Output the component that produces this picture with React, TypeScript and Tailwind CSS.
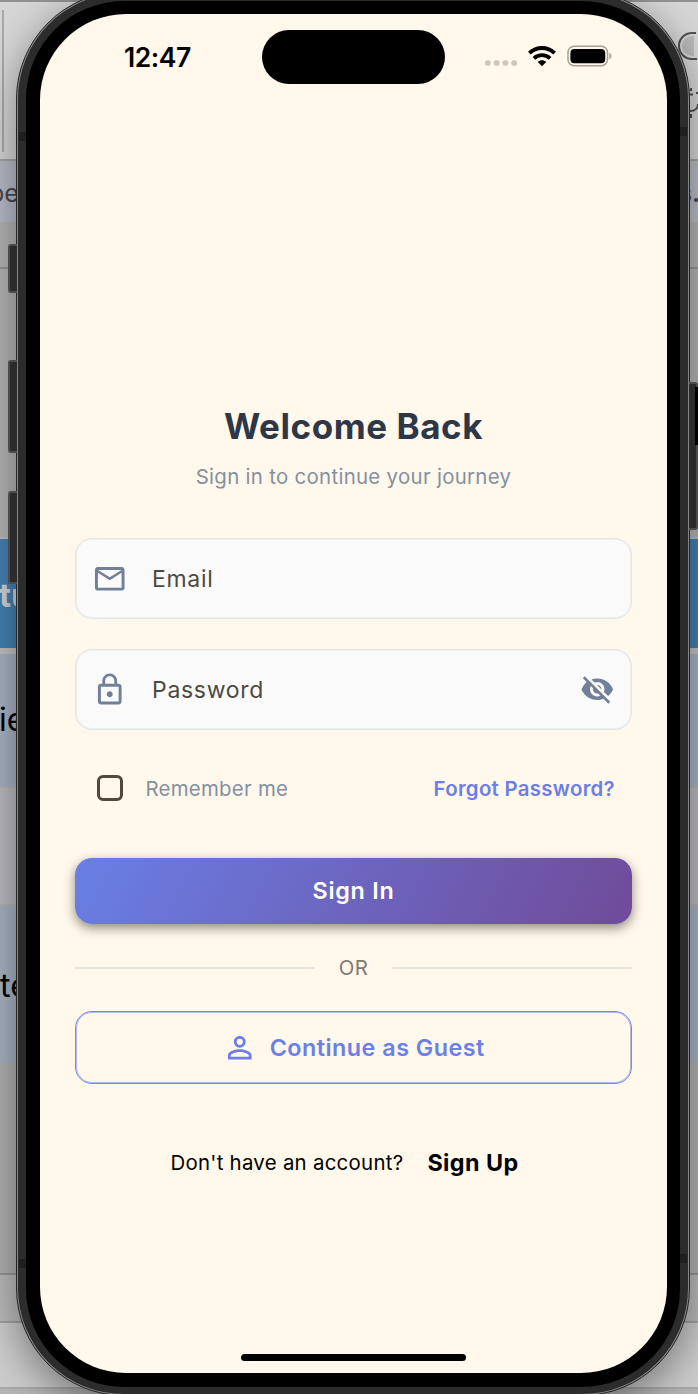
import type { ReactNode } from "react";
import { MdLockOutline, MdMailOutline, MdPersonOutline, MdVisibilityOff } from "react-icons/md";

function StatusBar() {
  return (
    <header className="flex h-[90px] shrink-0 items-start">
      <div className="mt-[28px] ml-[84px] w-[138px] text-[26.5px] leading-[30px] font-semibold tracking-[-0.45px] text-black">
        12:47
      </div>
      <div className="mt-4 h-[54px] w-[183px] rounded-full bg-black" />
      <div className="mt-[30px] ml-[40px] flex h-6 items-center">
        <svg className="mt-3.5 h-[6px] w-[33px]" viewBox="0 0 33 6" fill="#ccc7bb">
          <rect x="0" y="0.2" width="5.6" height="5.6" rx="2" />
          <rect x="8.8" y="0.2" width="5.6" height="5.6" rx="2" />
          <rect x="17.6" y="0.2" width="5.6" height="5.6" rx="2" />
          <rect x="26.4" y="0.2" width="5.6" height="5.6" rx="2" />
        </svg>
        <svg className="ml-[10px] h-[20px] w-[28px]" viewBox="0 0 28 20" fill="none" stroke="#000" strokeWidth="3.9">
          <path d="M1.4 7.1C8.4.3 19.6.3 26.6 7.1" />
          <path d="M5.9 12.3c4.6-4.3 11.6-4.3 16.2 0" />
          <path d="M9.7 15.9c2.4-2.2 6.2-2.2 8.6 0L14 20.2z" fill="#000" stroke="none" />
        </svg>
        <svg className="ml-[11px] h-[22px] w-[46px]" viewBox="0 0 46 22">
          <rect x="1" y="1.2" width="39.5" height="19.5" rx="6.2" fill="none" stroke="#a39f96" strokeWidth="1.5" />
          <rect x="3.4" y="4" width="34.8" height="14.2" rx="4" />
          <path d="M42.3 7.7c2.8 1 2.8 5.6 0 6.6z" fill="#a39f96" />
        </svg>
      </div>
    </header>
  );
}

function Field({ icon, label, trailing }: { icon: ReactNode; label: string; trailing?: ReactNode }) {
  return (
    <div className="flex h-[81px] items-center rounded-[17px] border border-[#e2e4e6] bg-[#fafafa] pr-[17px] pl-[16px] text-[35.5px] text-[#718096] shadow-[inset_0_0_0_1px_#efeff0]">
      {icon}
      <span className="mt-[2px] ml-[24.5px] flex-1 text-[23px] tracking-[0.7px] text-[#4d493f]">{label}</span>
      {trailing}
    </div>
  );
}

function LoginForm() {
  return (
    <main className="flex flex-1 flex-col px-[35px] pt-[300px]">
      <h1 className="text-center text-[35px] leading-[44px] font-bold tracking-[0.55px] text-[#2d3748]">Welcome Back</h1>
      <p className="mt-[15px] text-center text-[20.4px] leading-[28px] tracking-[0.31px] text-[#8390a2]">
        Sign in to continue your journey
      </p>
      <div className="mt-[47px] flex flex-col gap-[30px]">
        <Field icon={<MdMailOutline />} label="Email" />
        <Field icon={<MdLockOutline />} label="Password" trailing={<MdVisibilityOff className="text-[34.5px]" />} />
      </div>
      <div className="mt-[38px] flex h-10 items-center pr-[17px] pl-[22px] text-[20.4px]">
        <i className="size-[26px] rounded-[6px] border-[3px] border-[#4d493f]" />
        <span className="mt-0.5 ml-[22.5px] flex-1 tracking-[0.26px] text-[#8390a2]">Remember me</span>
        <span className="mt-0.5 font-semibold tracking-[0.3px] text-[#6c7fe4]">Forgot Password?</span>
      </div>
      <button className="mt-[50px] h-[66px] rounded-[17px] bg-linear-[117deg,#697fe5,#704b99] text-[23.3px] font-semibold tracking-[0.75px] text-white shadow-[0_4px_12px_rgba(0,0,0,0.45)]">
        Sign In
      </button>
      <div className="mt-[30px] flex h-7 items-center text-[20.4px] tracking-[0.4px] text-[#7d7a75]">
        <i className="h-[1.5px] flex-1 bg-[#e4e5df]" />
        <span className="w-[77px] text-center">OR</span>
        <i className="h-[1.5px] flex-1 bg-[#e4e5df]" />
      </div>
      <button className="mt-[29px] flex h-[73px] items-center justify-center rounded-[17px] border border-[#7788e8] text-[23.3px] font-semibold tracking-[0.5px] text-[#6c7fe8] shadow-[inset_0_0_0_1px_#b4bbee]">
        <MdPersonOutline className="mr-[12px] text-[35.5px]" />
        <span className="mt-0.5">Continue as Guest</span>
      </button>
      <div className="mt-[59px] flex h-10 items-center justify-center gap-[24px] pt-px pr-[18px] text-black">
        <span className="text-[20.4px] tracking-[0.28px]">Don&apos;t have an account?</span>
        <span className="text-[23.3px] font-bold tracking-[0.45px]">Sign Up</span>
      </div>
    </main>
  );
}

function Backdrop() {
  return (
    <div className="col-start-1 row-start-1 flex h-[1394px] flex-col overflow-hidden bg-[#b4b4b4] leading-none whitespace-nowrap">
      <div className="flex h-[161px] shrink-0 justify-between border-t-2 border-b-2 border-t-[#929292] border-b-[#a3a3a3] bg-[#d6d6d6]">
        <i className="mt-2 ml-0.5 h-[142px] w-0.5 bg-[#a9a9a9]" />
        <svg className="mt-6 h-24 w-[22px]" viewBox="0 0 22 96" fill="none" stroke="#505050" strokeWidth="2">
          <path d="M18 10v20h-2a10 10 0 0 1 0-20z" fill="#b9b9b9" stroke="none" />
          <path d="M20 7h-4a13 13 0 0 0 0 26h5" />
          <path d="M14 85c5 0 8-3 8-7M15 62v3m-2 3.5h4M15 88v4M20 67h2" />
        </svg>
      </div>
      <div className="flex h-[61px] shrink-0 items-center justify-between bg-[#b8bcc7] pt-[3px] text-[25px] text-[#45484f]">
        <span className="-ml-[11px]">pe</span>
        <span className="-mr-[2px] font-semibold">s.</span>
      </div>
      <div className="h-[47px] shrink-0 border-b-2 border-[#979797] bg-[#b4b4b4]" />
      <div className="h-[268px] shrink-0 bg-[#b4b4b4]" />
      <div className="flex h-[111px] shrink-0 items-center border-t-2 border-[#bcbcbc] bg-[#4580b4] pt-[3px] text-[33px] font-bold text-[#d0d4d8]">
        <span className="-ml-px">tu</span>
      </div>
      <div className="flex h-[140px] shrink-0 items-center border-t-[6px] border-b-2 border-t-[#c3c3c3] border-b-[#b4b4b4] bg-[#a8b3c4] text-[32px] text-black">
        <span className="-ml-px">ie</span>
      </div>
      <div className="h-[118px] shrink-0 border-b-2 border-[#b4b4b4] bg-[#bbbbc0]" />
      <div className="flex h-[159px] shrink-0 items-center border-b-2 border-[#b4b4b4] bg-[#a8b3c4] pt-0.5 text-[32px] text-black">
        te
      </div>
      <div className="h-[210px] shrink-0 border-b-2 border-[#969696] bg-[#b2b2b2]" />
      <div className="h-[48px] shrink-0 border-b-2 border-[#a2a2a2] bg-[#bcbcbc]" />
      <div className="h-[66px] shrink-0 border-b-2 border-[#a8a8a8] bg-[#cccccc]" />
    </div>
  );
}

function Phone() {
  return (
    <div className="relative col-start-1 row-start-1 -mt-[9px] ml-[16px] h-[1405px] w-[674px] rounded-[108px] border border-[#242424] bg-[#858585] p-px shadow-[0_12px_40px_rgba(0,0,0,0.42)]">
      <i className="absolute top-[252px] -left-[9px] h-[49px] w-[9px] rounded-l-[3px] border-2 border-r-0 border-[#4b4b4b] bg-[#2b2b2b]" />
      <i className="absolute top-[368px] -left-[9px] h-[93px] w-[9px] rounded-l-[3px] border-2 border-r-0 border-[#4b4b4b] bg-[#2b2b2b]" />
      <i className="absolute top-[499px] -left-[9px] h-[93px] w-[9px] rounded-l-[3px] border-2 border-r-0 border-[#4b4b4b] bg-[#2b2b2b]" />
      <i className="absolute top-[390px] -right-[9px] h-[148px] w-[9px] rounded-r-[3px] border-2 border-l-0 border-[#4b4b4b] bg-[#2b2b2b]" />
      <i className="absolute top-[395px] -right-[9px] h-[58px] w-[3px] bg-black" />
      <div className="h-full rounded-[106px] bg-[#2c2c2c] px-[8px] pt-[8px] pb-[7px]">
        <i className="absolute top-[140px] left-[2px] h-[9px] w-[7px] bg-[#1f1f1f]" />
        <i className="absolute top-[135px] right-[2px] h-[9px] w-[7px] bg-[#1f1f1f]" />
        <i className="absolute bottom-[127px] left-[2px] h-[9px] w-[7px] bg-[#1f1f1f]" />
        <i className="absolute right-[2px] bottom-[132px] h-[9px] w-[7px] bg-[#1f1f1f]" />
        <div className="h-full rounded-[98px] bg-black px-[14px] pt-[13px] pb-[14px]">
          <div className="flex h-[1359px] w-[627px] flex-col overflow-hidden rounded-[86px] bg-[#fff8eb]">
            <StatusBar />
            <LoginForm />
            <i className="mb-[12px] ml-[201px] h-[7px] w-[225px] shrink-0 rounded-full bg-black" />
          </div>
        </div>
      </div>
    </div>
  );
}

export default function App() {
  return (
    <div className="grid h-[1394px] w-[698px] grid-cols-1 overflow-hidden font-['Inter',sans-serif]">
      <Backdrop />
      <Phone />
    </div>
  );
}
